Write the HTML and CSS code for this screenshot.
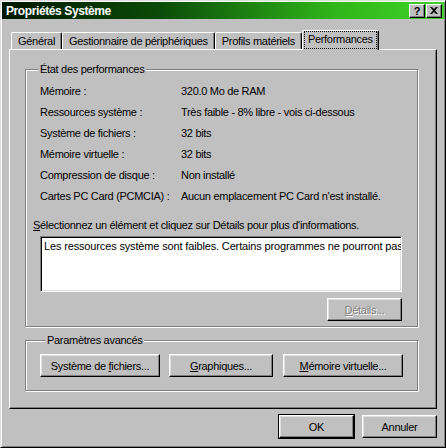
FILE: index.html
```
<!DOCTYPE html>
<html lang="fr">
<head>
    <meta charset="UTF-8">
    <title>Propriétés Système</title>
    <link rel="stylesheet" href="styles.css">
</head>
<body>
    <div class="window">
        <div class="titlebar">
            <span class="title">Propriétés Système</span>
            <div class="caption-buttons">
                <span class="caption-btn help">?</span>
                <span class="caption-btn close">
                    <svg width="8" height="7" viewBox="0 0 8 7"><path d="M0 0h2l2 2 2-2h2L5 3.5 8 7H6L4 5 2 7H0l3-3.5z" fill="#000"/></svg>
                </span>
            </div>
        </div>

        <div class="tabs">
            <div class="tab">Général</div>
            <div class="tab">Gestionnaire de périphériques</div>
            <div class="tab">Profils matériels</div>
            <div class="tab selected"><span class="focus">Performances</span></div>
        </div>

        <div class="panel">
            <fieldset class="group status">
                <legend>État des performances</legend>
                <div class="info">
                    <span>Mémoire :</span><span>320.0 Mo de RAM</span>
                    <span>Ressources système :</span><span>Très faible - 8% libre - vois ci-dessous</span>
                    <span>Système de fichiers :</span><span>32 bits</span>
                    <span>Mémoire virtuelle :</span><span>32 bits</span>
                    <span>Compression de disque :</span><span>Non installé</span>
                    <span>Cartes PC Card (PCMCIA) :</span><span>Aucun emplacement PC Card n'est installé.</span>
                </div>
                <p class="hint"><u>S</u>électionnez un élément et cliquez sur Détails pour plus d'informations.</p>
                <div class="listbox">
                    <div class="item">Les ressources système sont faibles. Certains programmes ne pourront pas s'exécuter correctement.</div>
                </div>
                <div class="details-row">
                    <button class="btn disabled"><u>D</u>étails...</button>
                </div>
            </fieldset>

            <fieldset class="group advanced">
                <legend>Paramètres avancés</legend>
                <div class="adv-buttons">
                    <button class="btn wide">Système de <u>f</u>ichiers...</button>
                    <button class="btn mid"><u>G</u>raphiques...</button>
                    <button class="btn wide"><u>M</u>émoire virtuelle...</button>
                </div>
            </fieldset>
        </div>

        <div class="footer">
            <button class="btn default">OK</button>
            <button class="btn">Annuler</button>
        </div>
    </div>
</body>
</html>
```

FILE: styles.css
```
body {
    margin: 0;
    background-color: #c0c0c0;
    font-family: "Liberation Sans", Arial, sans-serif;
    font-size: 11px;
    letter-spacing: -0.3px;
    color: #000;
}
.window {
    width: 446px;
    height: 448px;
    box-sizing: border-box;
    padding: 1px;
    background-color: #c0c0c0;
    border: 1px solid;
    border-color: #dfdfdf #000 #000 #dfdfdf;
    box-shadow: inset 1px 1px #fff, inset -1px -1px #808080;
    display: flex;
    flex-direction: column;
    overflow: hidden;
}
.titlebar {
    height: 17px;
    flex-shrink: 0;
    display: flex;
    align-items: center;
    justify-content: space-between;
    padding: 0 2px 0 4px;
    background: linear-gradient(to right, #001800, #0a4a08 35%, #2fb518 75%, #3fd22a);
}
.title {
    color: #fff;
    font-weight: bold;
    font-size: 12px;
    letter-spacing: -0.4px;
}
.caption-buttons {
    display: flex;
    gap: 1px;
}
.caption-btn {
    width: 14px;
    height: 12px;
    display: flex;
    align-items: center;
    justify-content: center;
    background-color: #c0c0c0;
    border: 1px solid;
    border-color: #fff #000 #000 #fff;
    box-shadow: inset -1px -1px #808080;
    font-weight: bold;
    font-size: 11px;
    line-height: 12px;
}
.tabs {
    display: flex;
    align-items: flex-end;
    margin: 11px 0 0 9px;
    height: 19px;
    flex-shrink: 0;
    position: relative;
    z-index: 1;
}
.tab {
    height: 16px;
    line-height: 16px;
    padding: 0 6px;
    border: 1px solid;
    border-color: #fff #000 transparent #fff;
    border-bottom: none;
    border-radius: 2px 2px 0 0;
    box-shadow: inset -1px 0 #808080;
}
.tab.selected {
    height: 19px;
    line-height: 17px;
    padding: 0 1px;
    margin-bottom: -1px;
    background-color: #c0c0c0;
}
.tab.selected .focus {
    display: block;
    padding: 0 4px;
    outline: 1px dotted #000;
    outline-offset: -1px;
    height: 18px;
}
.panel {
    margin: 0 7px 0 7px;
    height: 360px;
    flex-shrink: 0;
    box-sizing: border-box;
    border: 1px solid;
    border-color: #fff #000 #000 #fff;
    box-shadow: inset -1px -1px #808080;
    padding: 13px 18px 0 15px;
}
.group {
    margin: 0;
    padding: 0;
    min-width: 0;
    border: 1px solid #808080;
    box-shadow: inset 1px 1px #fff, 1px 1px #fff;
}
.group legend {
    padding: 0 2px;
    margin-left: 5px;
    line-height: 13px;
    background-color: #c0c0c0;
}
.status {
    padding: 4px 15px 5px 7px;
}
.info {
    display: grid;
    grid-template-columns: 141px 1fr;
    grid-auto-rows: 21px;
    align-items: center;
    padding-left: 7px;
}
.hint {
    margin: 12px 0 0 0;
    line-height: 14px;
}
.listbox {
    margin: 4px 0 0 7px;
    height: 56px;
    box-sizing: border-box;
    background-color: #fff;
    border: 1px solid;
    border-color: #808080 #fff #fff #808080;
    box-shadow: inset 1px 1px #000, inset -1px -1px #dfdfdf;
    padding: 3px 3px;
    overflow: hidden;
}
.listbox .item {
    white-space: nowrap;
    line-height: 13px;
    letter-spacing: -0.15px;
}
.details-row {
    display: flex;
    justify-content: flex-end;
    margin-top: 6px;
}
.btn {
    font-family: inherit;
    font-size: 11px;
    letter-spacing: inherit;
    color: #000;
    height: 23px;
    width: 75px;
    padding: 0;
    background-color: #c0c0c0;
    border: 1px solid;
    border-color: #fff #000 #000 #fff;
    box-shadow: inset -1px -1px #808080, inset 1px 1px #dfdfdf;
    border-radius: 0;
}
.btn.disabled {
    color: #808080;
    text-shadow: 1px 1px #fff;
}
.btn.default {
    outline: 1px solid #000;
    outline-offset: 0;
}
.advanced {
    margin-top: 7px;
    padding: 7px 14px 13px 14px;
}
.adv-buttons {
    display: flex;
    gap: 9px;
}
.btn.wide {
    width: 120px;
}
.btn.mid {
    width: 104px;
    margin-right: 1px;
}
.footer {
    display: flex;
    justify-content: flex-end;
    gap: 8px;
    margin: 6px 7px 0 0;
}
```
